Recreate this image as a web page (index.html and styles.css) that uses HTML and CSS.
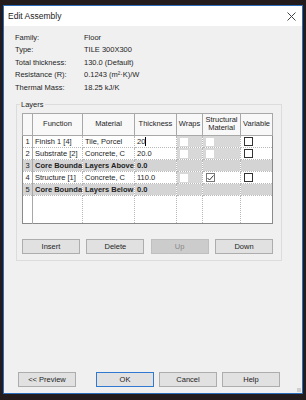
FILE: index.html
```html
<!DOCTYPE html>
<html lang="en">
<head>
    <meta charset="UTF-8">
    <meta name="viewport" content="width=device-width, initial-scale=1.0">
    <title>Edit Assembly</title>
    <link rel="stylesheet" href="styles.css">
</head>
<body>
    <div class="dialog">
        <div class="titlebar">
            <span class="title">Edit Assembly</span>
            <svg class="close" width="9" height="9" viewBox="0 0 9 9">
                <path d="M0.5 0.5 L8.5 8.5 M8.5 0.5 L0.5 8.5" stroke="#444" stroke-width="1" fill="none"/>
            </svg>
        </div>
        <div class="content">
            <div class="info">
                <div class="info-label">Family:</div><div>Floor</div>
                <div class="info-label">Type:</div><div>TILE 300X300</div>
                <div class="info-label">Total thickness:</div><div>130.0 (Default)</div>
                <div class="info-label">Resistance (R):</div><div>0.1243 (m²·K)/W</div>
                <div class="info-label">Thermal Mass:</div><div>18.25 kJ/K</div>
            </div>

            <fieldset class="layers">
                <legend>Layers</legend>
                <table class="grid">
                    <colgroup>
                        <col style="width:10px">
                        <col style="width:50px">
                        <col style="width:52px">
                        <col style="width:42px">
                        <col style="width:26px">
                        <col style="width:38px">
                        <col style="width:32px">
                    </colgroup>
                    <thead>
                        <tr>
                            <th></th>
                            <th>Function</th>
                            <th>Material</th>
                            <th>Thickness</th>
                            <th>Wraps</th>
                            <th>Structural<br>Material</th>
                            <th>Variable</th>
                        </tr>
                    </thead>
                    <tbody>
                        <tr>
                            <td class="num">1</td>
                            <td>Finish 1 [4]</td>
                            <td>Tile, Porcel</td>
                            <td class="editing">20<span class="caret"></span></td>
                            <td class="off"><span class="box blank"></span></td>
                            <td class="off"><span class="box blank"></span></td>
                            <td><span class="box"></span></td>
                        </tr>
                        <tr>
                            <td class="num">2</td>
                            <td>Substrate [2]</td>
                            <td>Concrete, C</td>
                            <td>20.0</td>
                            <td class="off"><span class="box blank"></span></td>
                            <td class="off"><span class="box blank"></span></td>
                            <td><span class="box"></span></td>
                        </tr>
                        <tr class="core">
                            <td class="num">3</td>
                            <td>Core Bounda</td>
                            <td>Layers Above</td>
                            <td>0.0</td>
                            <td></td>
                            <td></td>
                            <td></td>
                        </tr>
                        <tr>
                            <td class="num">4</td>
                            <td>Structure [1]</td>
                            <td>Concrete, C</td>
                            <td>110.0</td>
                            <td class="off"><span class="box blank"></span></td>
                            <td><span class="box checked">
                                <svg width="7" height="6" viewBox="0 0 7 6"><path d="M0.5 3 L2.5 5 L6.5 0.5" stroke="#333" stroke-width="1" fill="none"/></svg>
                            </span></td>
                            <td><span class="box"></span></td>
                        </tr>
                        <tr class="core">
                            <td class="num">5</td>
                            <td>Core Bounda</td>
                            <td>Layers Below</td>
                            <td>0.0</td>
                            <td></td>
                            <td></td>
                            <td></td>
                        </tr>
                        <tr class="filler">
                            <td class="num"></td>
                            <td></td>
                            <td></td>
                            <td></td>
                            <td></td>
                            <td></td>
                            <td></td>
                        </tr>
                    </tbody>
                </table>

                <div class="row-buttons">
                    <button class="btn">Insert</button>
                    <button class="btn">Delete</button>
                    <button class="btn disabled">Up</button>
                    <button class="btn">Down</button>
                </div>
            </fieldset>
        </div>

        <div class="footer">
            <button class="btn">&lt;&lt; Preview</button>
            <div class="footer-right">
                <button class="btn default">OK</button>
                <button class="btn">Cancel</button>
                <button class="btn">Help</button>
            </div>
        </div>
        <span class="grip"></span>
    </div>
</body>
</html>
```

FILE: styles.css
```css
body {
    margin: 0;
    background-color: #241c1c;
    font-family: "Liberation Sans", Arial, sans-serif;
    font-size: 7.5px;
    color: #1e1e1e;
}
.dialog {
    position: relative;
    box-sizing: border-box;
    width: 300px;
    height: 389px;
    margin: 5px 0 0 3px;
    background-color: #f0f0f0;
    border: 1px solid #2b6cb8;
    display: flex;
    flex-direction: column;
}
.titlebar {
    height: 20px;
    background-color: #ffffff;
    display: flex;
    align-items: center;
    justify-content: space-between;
    padding: 0 6px 0 4px;
}
.title {
    font-size: 8.5px;
    color: #222;
}
.content {
    padding: 5px 20px 0 11px;
}
.info {
    display: grid;
    grid-template-columns: 69px 1fr;
    grid-auto-rows: 12.5px;
    align-items: center;
}
.layers {
    margin: 6px 0 0 1px;
    padding: 4px 8px 4px 5px;
    border: 1px solid #dcdcdc;
    height: 151px;
}
.layers legend {
    padding: 0 1px;
    margin-left: -2px;
}
.grid {
    border-collapse: collapse;
    table-layout: fixed;
    width: 250px;
    background-color: #ffffff;
    border: 1px solid #8a8a8a;
}
.grid th {
    height: 21px;
    font-weight: normal;
    color: #1e1e1e;
    background-color: #f8f8f8;
    border: 1px solid #a8a8a8;
    text-align: center;
    padding: 0;
    line-height: 8px;
    white-space: nowrap;
}
.grid td {
    height: 11px;
    padding: 0 0 0 2px;
    color: #1e1e1e;
    border: 1px dotted #b8b8b8;
    white-space: nowrap;
    overflow: hidden;
    line-height: 11px;
}
.grid td.num {
    padding: 0;
    text-align: center;
    border-right: 1px solid #a8a8a8;
}
.grid .core td {
    background-color: #d4d4d4;
    font-weight: bold;
}
.grid .core td.num {
    font-weight: normal;
}
.grid td.off {
    background-color: #d8d8d8;
}
.grid .filler td {
    height: 27px;
}
.editing .caret {
    display: inline-block;
    width: 1px;
    height: 9px;
    background-color: #000;
    vertical-align: middle;
}
.box {
    display: inline-block;
    box-sizing: border-box;
    width: 9px;
    height: 9px;
    border: 1px solid #333;
    background-color: #ffffff;
    vertical-align: middle;
    margin-left: 1px;
}
.box.blank {
    border: none;
    width: 8px;
    height: 8px;
}
.box.checked {
    border-color: #777;
    position: relative;
}
.box.checked svg {
    position: absolute;
    left: 0;
    top: 0.5px;
}
.btn {
    box-sizing: border-box;
    width: 58px;
    height: 15px;
    padding: 0;
    font-family: "Liberation Sans", Arial, sans-serif;
    font-size: 7.5px;
    color: #1e1e1e;
    background-color: #e1e1e1;
    border: 1px solid #adadad;
}
.btn.disabled {
    background-color: #cccccc;
    border-color: #bfbfbf;
    color: #8a8a8a;
}
.btn.default {
    border-color: #2f7ad0;
}
.row-buttons {
    display: flex;
    justify-content: space-between;
    width: 251px;
    margin-top: 15px;
}
.footer {
    margin-top: auto;
    margin-bottom: 6px;
    display: flex;
    padding: 0 0 0 14px;
}
.footer-right {
    display: flex;
    gap: 5px;
    margin-left: 20px;
}
.grip {
    position: absolute;
    right: 1px;
    bottom: 1px;
    width: 4px;
    height: 4px;
    background-image: radial-gradient(#aaa 0.6px, transparent 0.8px);
    background-size: 2px 2px;
}
```
